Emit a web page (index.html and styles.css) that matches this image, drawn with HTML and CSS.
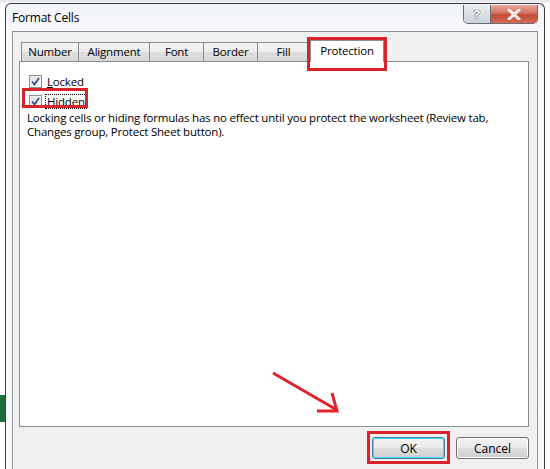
FILE: index.html
```html
<!DOCTYPE html>
<html>
<head>
<meta charset="utf-8">
<link rel="stylesheet" href="styles.css">
</head>
<body>
<div class="screen">
  <div class="window">
    <div class="titlebar">
      <span class="title">Format Cells</span>
      <div class="caption-btns">
        <div class="cbtn help">?</div>
        <div class="cbtn close">
          <svg width="14" height="11" viewBox="0 0 14 11"><path d="M2 1 L12 10 M12 1 L2 10" stroke="#fff" stroke-width="3" stroke-linecap="round"/><path d="M2 1 L12 10 M12 1 L2 10" stroke="#6b2a26" stroke-width="0.6" fill="none" opacity="0.35"/></svg>
        </div>
      </div>
    </div>
    <div class="client">
      <div class="tabs">
        <div class="tab t-number">Number</div>
        <div class="tab t-align">Alignment</div>
        <div class="tab t-font">Font</div>
        <div class="tab t-border">Border</div>
        <div class="tab t-fill">Fill</div>
        <div class="tab active t-prot">Protection</div>
      </div>
      <div class="panel">
        <label class="check">
          <span class="box"><svg width="9" height="9" viewBox="0 0 9 9"><path d="M1 4.5 L3.5 7.5 L8 1" stroke="#3b4f8a" stroke-width="1.8" fill="none"/></svg></span>
          <span class="lbl"><u>L</u>ocked</span>
        </label>
        <label class="check hidden-row">
          <span class="box"><svg width="9" height="9" viewBox="0 0 9 9"><path d="M1 4.5 L3.5 7.5 L8 1" stroke="#3b4f8a" stroke-width="1.8" fill="none"/></svg></span>
          <span class="lbl focus">H<u>i</u>dden</span>
        </label>
        <p class="note">Locking cells or hiding formulas has no effect until you protect the worksheet (Review tab,<br>Changes group, Protect Sheet button).</p>
      </div>
      <div class="footer">
        <button class="btn default">OK</button>
        <button class="btn">Cancel</button>
      </div>
    </div>
  </div>
  <svg class="arrow" width="80" height="50" viewBox="268 366 80 50">
    <path d="M273 373 L337 410" stroke="#e0222b" stroke-width="3" fill="none"/>
    <path d="M332 393 L337 411 L317 411" stroke="#e0222b" stroke-width="3" fill="none"/>
  </svg>
</div>
</body>
</html>
```
FILE: styles.css
```css
html, body {
  margin: 0;
  padding: 0;
}
body {
  width: 550px;
  height: 469px;
  overflow: hidden;
  font-family: "Open Sans", "Noto Sans", sans-serif;
  font-size: 11.5px;
  letter-spacing: -0.2px;
  color: #000;
}
.screen {
  position: relative;
  width: 550px;
  height: 469px;
  box-sizing: border-box;
  padding: 3px 0 0 5px;
  background:
    linear-gradient(to bottom, transparent 395px, #1e6b3c 395px, #1e6b3c 422px, transparent 422px) 0 0 / 5px 100% no-repeat,
    linear-gradient(to bottom, #dfe3e8 0, #f6f7f9 3px, #fff 4px);
  overflow: hidden;
}
.window {
  width: 540px;
  height: 470px;
  box-sizing: border-box;
  border: 1px solid #3a3d42;
  border-bottom: none;
  border-radius: 6px 6px 0 0;
  background: linear-gradient(to bottom, #f1f4f8 0, #f8f9fb 30px, #f7f8fa 100%);
  display: flex;
  flex-direction: column;
}
.titlebar {
  height: 27px;
  display: flex;
  align-items: flex-start;
  justify-content: space-between;
  padding-left: 6px;
}
.title {
  margin-top: 6px;
  font-size: 12px;
  letter-spacing: -0.2px;
  line-height: 16px;
}
.caption-btns {
  display: flex;
  margin-right: 6px;
  margin-top: 1px;
  height: 18px;
  border: 1px solid #6a6e74;
  border-top: none;
  border-radius: 0 0 5px 5px;
  overflow: hidden;
}
.cbtn {
  height: 18px;
  display: flex;
  align-items: center;
  justify-content: center;
}
.help {
  width: 26px;
  border-right: 1px solid #6a6e74;
  background: linear-gradient(to bottom, #e9edf1, #cdd3da);
  color: #fff;
  font-weight: bold;
  font-size: 13px;
  text-shadow: 0 0 1px #333, 0 0 1px #333;
}
.close {
  width: 46px;
  background: linear-gradient(to bottom, #e9a99c 0, #d4705e 45%, #c24a38 55%, #d66b55 100%);
}
.client {
  flex: 1;
  margin: 0 6px 3px 6px;
  background: #f0f0f0;
  border: 1px solid #8f9296;
  display: flex;
  flex-direction: column;
}
.tabs {
  display: flex;
  align-items: flex-end;
  padding: 8px 0 0 8px;
  height: 22px;
  position: relative;
  z-index: 1;
}
.tab {
  box-sizing: border-box;
  height: 19px;
  padding: 0;
  text-align: center;
  line-height: 17px;
  border: 1px solid #898c95;
  border-bottom: none;
  margin-right: -1px;
  margin-bottom: 1px;
  background: linear-gradient(to bottom, #f3f3f3 0, #ececec 50%, #dedede 51%, #d9d9d9 100%);
}
.t-number { width: 58px; }
.t-align { width: 72px; }
.t-font { width: 55px; }
.t-border { width: 55px; }
.t-fill { width: 53px; }
.tab.active {
  position: relative;
  width: 74px;
  height: 22px;
  margin-bottom: 0;
  margin-left: 1px;
  line-height: 19px;
  background: #fff;
}
.tab.active::after {
  content: "";
  position: absolute;
  left: -4px;
  right: -4px;
  top: -4px;
  bottom: -9px;
  border: 3px solid #d9232b;
}
.panel {
  margin: -1px 8px 0 6px;
  height: 366px;
  box-sizing: border-box;
  background: #fff;
  border: 1px solid #898c95;
  padding: 9px 8px 0 7px;
}
.check {
  display: flex;
  align-items: center;
  height: 20px;
  margin-left: 2px;
  position: relative;
}
.box {
  width: 11px;
  height: 11px;
  border: 1px solid #8e8f8f;
  background: linear-gradient(135deg, #dcdcdc, #fbfbfb);
  display: flex;
  align-items: center;
  justify-content: center;
  box-shadow: inset 0 0 0 1px #f4f4f4;
}
.lbl {
  margin-left: 4px;
  line-height: 13px;
  padding: 0 1px;
}
.lbl.focus {
  outline: 1px dotted #000;
  outline-offset: 0;
}
.hidden-row::after {
  content: "";
  position: absolute;
  left: -7px;
  top: -3px;
  width: 60px;
  height: 14px;
  border: 3px solid #d9232b;
}
.note {
  margin: 0;
  line-height: 14px;
  white-space: nowrap;
}
.footer {
  display: flex;
  justify-content: flex-end;
  gap: 11px;
  padding: 10px 8px 0 0;
}
.btn {
  width: 73px;
  height: 22px;
  box-sizing: border-box;
  font-family: inherit;
  font-size: 12px;
  letter-spacing: 0;
  border: 1px solid #707070;
  border-radius: 3px;
  background: linear-gradient(to bottom, #f2f2f2 0, #ebebeb 50%, #dddddd 51%, #cfcfcf 100%);
  box-shadow: inset 0 0 0 1px #fcfcfc;
  padding: 0;
  color: #000;
}
.btn.default {
  border-color: #3c7fb1;
  position: relative;
  box-shadow: inset 0 0 0 1px #48d8fb;
}
.btn.default::after {
  content: "";
  position: absolute;
  left: -6px;
  right: -6px;
  top: -7px;
  bottom: -6px;
  border: 3px solid #d9232b;
}
.arrow {
  position: absolute;
  left: 268px;
  top: 366px;
}
```
